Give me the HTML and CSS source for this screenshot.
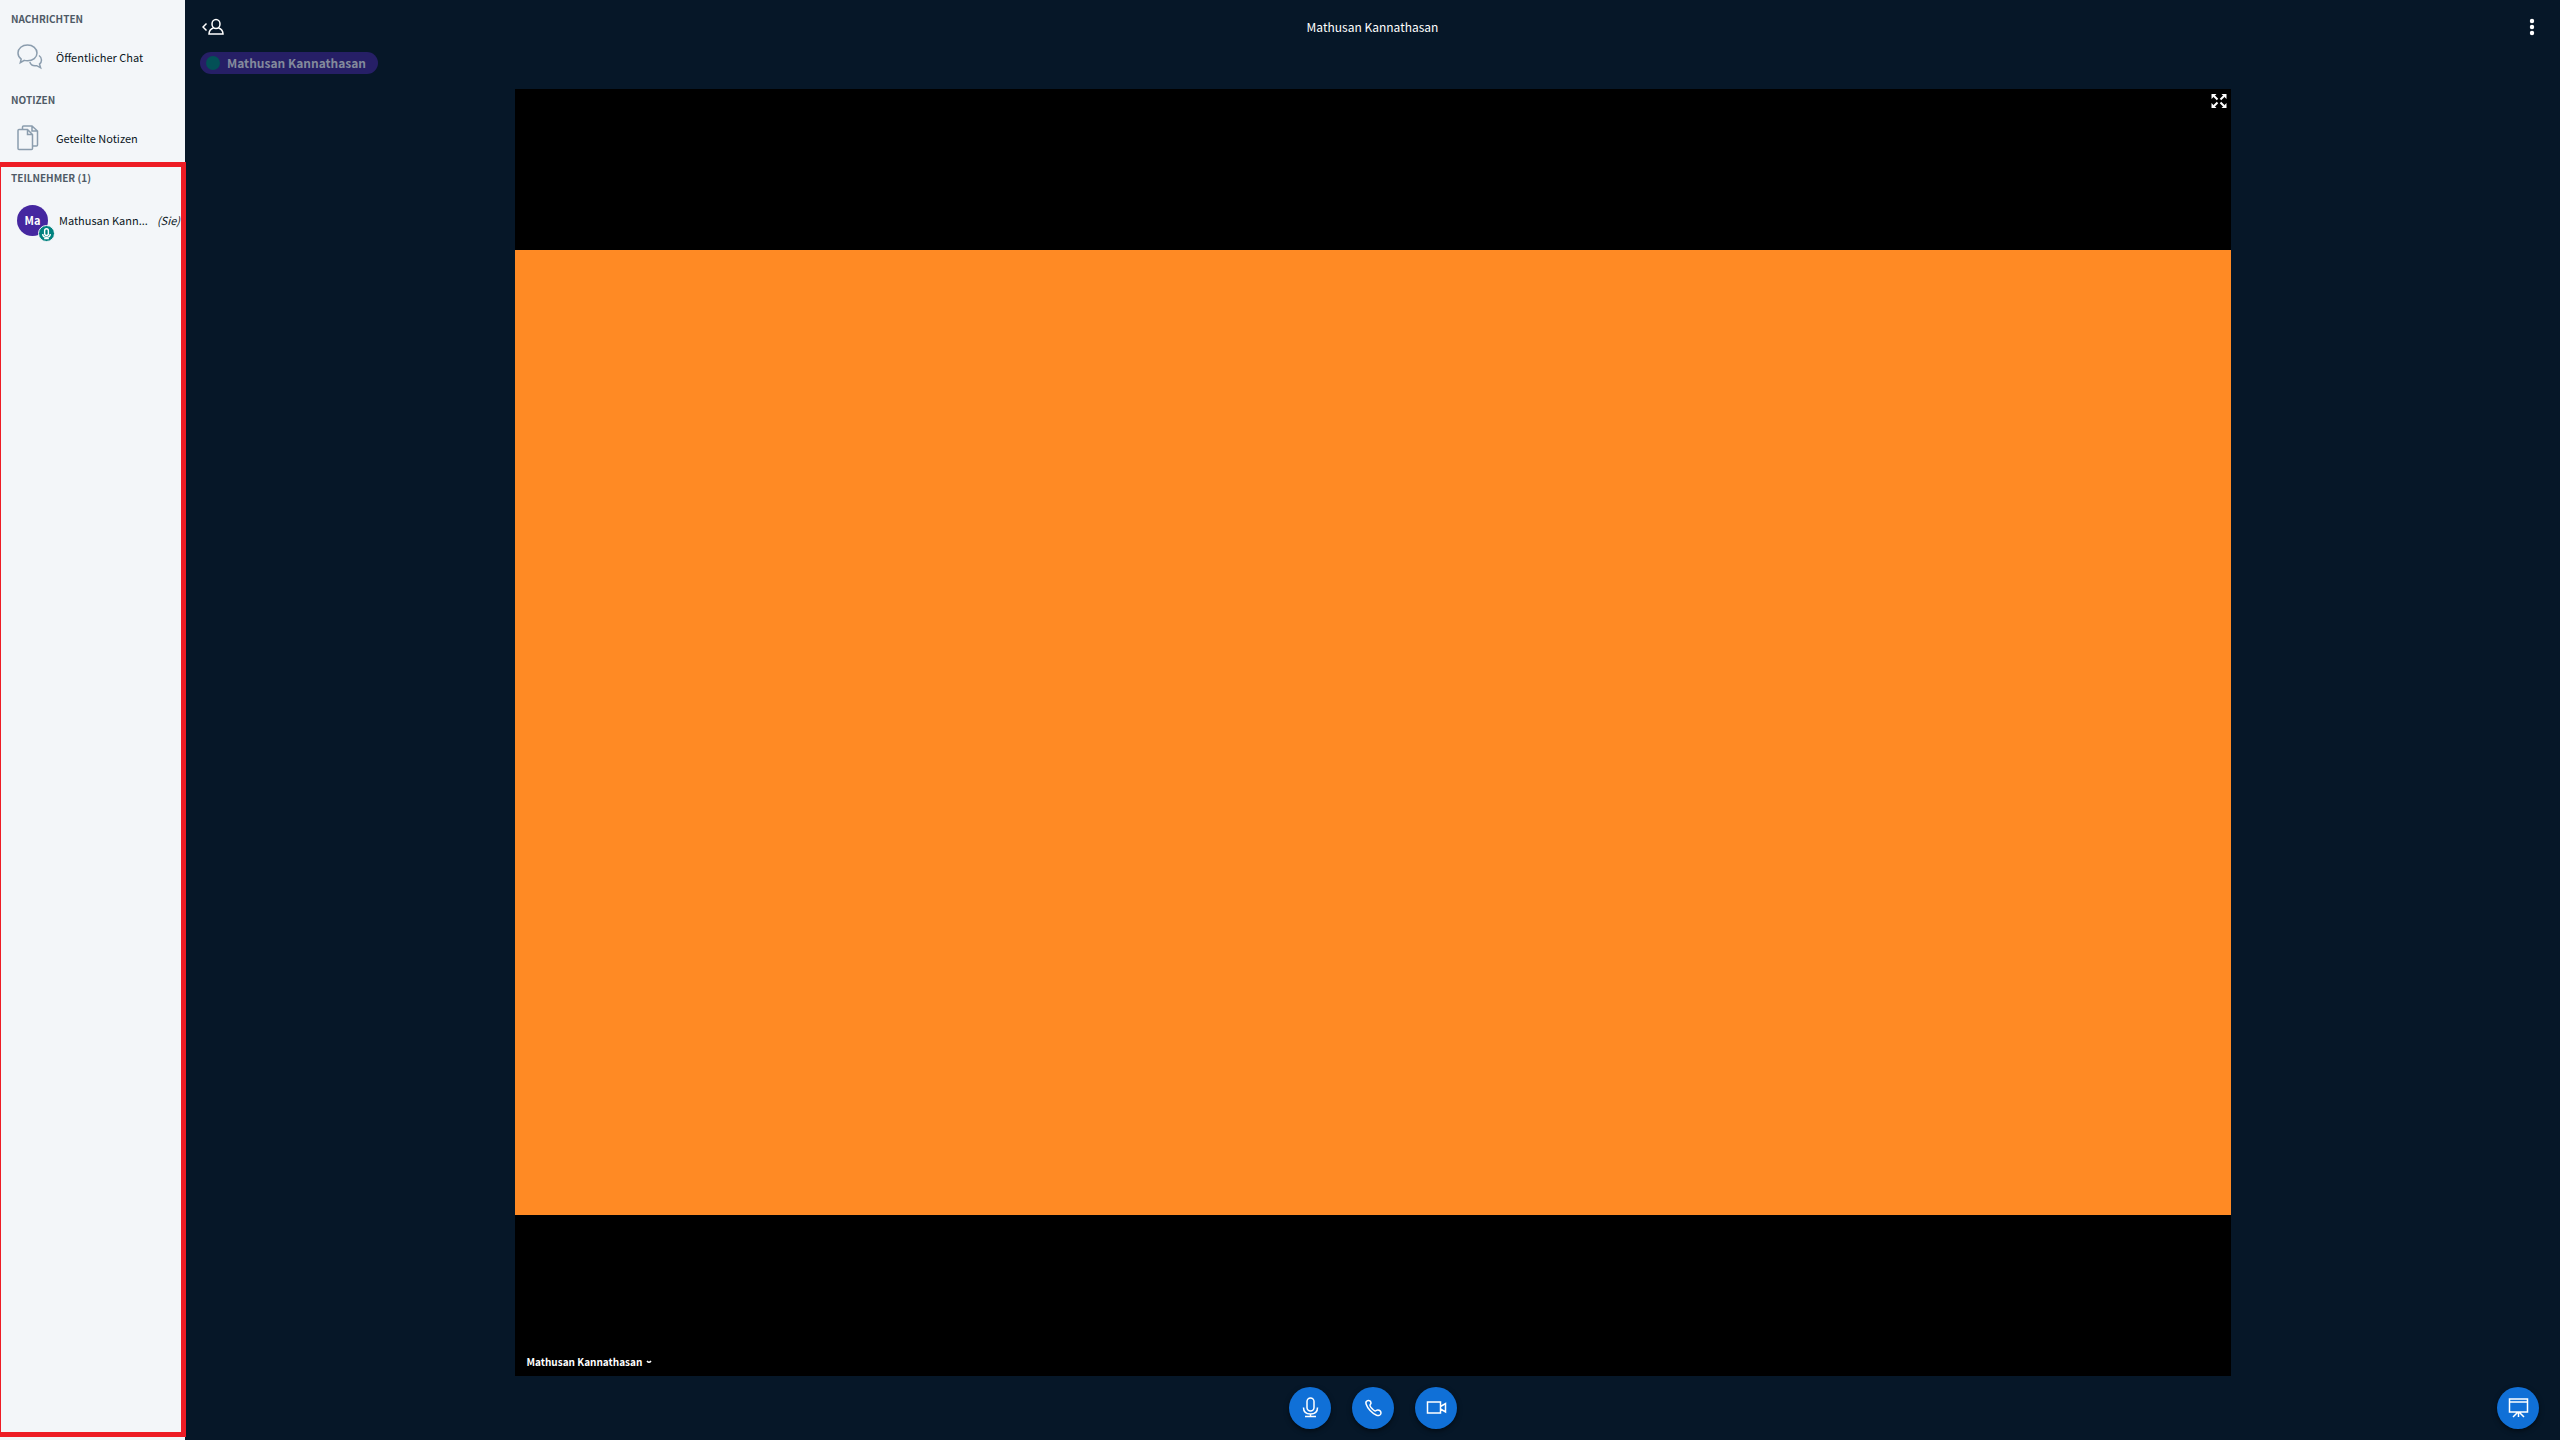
FILE: index.html
```html
<!DOCTYPE html>
<html lang="de">
<head>
<meta charset="utf-8">
<title>Mathusan Kannathasan</title>
<link rel="stylesheet" href="styles.css">
</head>
<body>
<div class="app">
  <aside class="sidebar">
    <section class="group">
      <h2 class="heading">NACHRICHTEN</h2>
      <a class="item" href="#chat">
        <svg class="item-icon" viewBox="0 0 26 26" aria-hidden="true"><path d="M10.500 1C5.200 1 1 4.400 1 9c0 2.600 1.300 4.700 3.200 6.100L3.300 18.700l4-2.300c1 .3 2.100.4 3.200.4C15.900 16.800 20 13.500 20 9S15.900 1 10.500 1z"/><path d="M22 11.500c1.600 1.100 2.500 2.600 2.500 4.400 0 1.700-.8 3.100-2 4.200l1.100 3.600-3.900-2c-3.400.6-6-.9-6.900-3.600"/></svg>
        <span>Öffentlicher Chat</span>
      </a>
    </section>
    <section class="group">
      <h2 class="heading">NOTIZEN</h2>
      <a class="item" href="#notes">
        <svg class="item-icon" viewBox="0 0 26 26" aria-hidden="true"><path d="M1 5.500Q1 4.500 2 4.500h8.500l5 5v14q0 1-1 1H2q-1 0-1-1zM10.500 4.500v5h5M5.500 4.500v-2.500q0-1 1-1H15l5.500 5v14q0 1-1 1h-4M15 1v5h5.500"/></svg>
        <span>Geteilte Notizen</span>
      </a>
    </section>
    <section class="group group-users">
      <h2 class="heading">TEILNEHMER (1)</h2>
      <div class="user">
        <span class="avatar">Ma
          <span class="badge"><svg viewBox="0 0 16 16" aria-hidden="true"><rect x="6" y="3" width="4" height="7" rx="2"/><path d="M4 8.500q0 3.500 4 3.500t4-3.500M8 12v1.500M5.500 13.500h5"/></svg></span>
        </span>
        <span class="user-name">Mathusan Kann...</span>
        <em class="you">(Sie)</em>
      </div>
      <div class="highlight"></div>
    </section>
  </aside>
  <main class="main">
    <header class="navbar">
      <button class="icon-button" type="button" aria-label="Teilnehmerliste umschalten">
        <svg width="22" height="18" viewBox="0 0 22 18" aria-hidden="true"><path d="M4.500 5.500 1 9l3.500 3.500"/><ellipse cx="14" cy="6" rx="4" ry="4.500"/><path d="M11.500 10Q7 11.500 7 16h14q0-4.500-4.500-6"/></svg>
      </button>
      <h1 class="title">Mathusan Kannathasan</h1>
      <button class="icon-button icon-end" type="button" aria-label="Optionen">
        <svg width="6" height="18" viewBox="0 0 6 18" aria-hidden="true"><g class="dots"><circle cx="3" cy="3" r="2.200"/><circle cx="3" cy="9" r="2.200"/><circle cx="3" cy="15" r="2.200"/></g></svg>
      </button>
    </header>
    <div class="talkers">
      <button class="talker" type="button"><span class="talker-dot"></span>Mathusan Kannathasan</button>
    </div>
    <div class="stage">
      <div class="webcam">
        <div class="video"></div>
        <button class="fullscreen" type="button" aria-label="Vollbild">
          <svg width="16" height="16" viewBox="0 0 16 16" aria-hidden="true"><path class="shaft" d="M3 3l3.500 3.500M13 3 9.500 6.500M3 13l3.500-3.500M13 13 9.500 9.500"/><path class="head" d="M.5 1h5l-5 5zM15.500 1v5l-5-5zM.5 15v-5l5 5zM15.500 15h-5l5-5z"/></svg>
        </button>
        <button class="cam-name" type="button">Mathusan Kannathasan
          <svg width="6" height="4" viewBox="0 0 6 4" aria-hidden="true"><path d="M1 1q2 2.500 4 0"/></svg>
        </button>
      </div>
    </div>
    <footer class="actions">
      <div class="actions-center">
        <button class="round" type="button" aria-label="Mikrofon">
          <svg viewBox="0 0 22 22" aria-hidden="true"><rect x="8" y="1" width="7" height="13" rx="3.500"/><path d="M4.500 10.500q0 6.500 7 6.500t7-6.500M11.500 17v2.500M6 19.500h11"/></svg>
        </button>
        <button class="round" type="button" aria-label="Audio verlassen">
          <svg viewBox="0 0 22 22" aria-hidden="true"><path d="M5.500 3.600C7.300 3 9 4.300 9 6.100c0 1.300-1.300 1.300-1 2.500.4 1.500 3.200 4.600 4.800 5.300 1.400.5 1.400-1 2.900-1 2.100 0 3.700 1.900 3.200 3.800-.4 1.700-2.400 2.200-4.300 1.500C9.900 16.300 5.500 11.300 4.100 6.900 3.600 5.400 4.200 4.100 5.500 3.600z"/></svg>
        </button>
        <button class="round" type="button" aria-label="Kamera">
          <svg viewBox="0 0 22 22" aria-hidden="true"><path d="M2.500 5h13v11h-13zM15.500 9.500l5-3v8.500l-5-3"/></svg>
        </button>
      </div>
      <button class="round round-end" type="button" aria-label="Präsentation wiederherstellen">
        <svg viewBox="0 0 22 22" aria-hidden="true"><path d="M2.500 2h18v13h-18zM2.500 5h18M11.500 15v5M10.500 15.500l-4.500 4.500M12.500 15.500l4.500 4.500"/></svg>
      </button>
    </footer>
  </main>
</div>
</body>
</html>
```
FILE: styles.css
```css
* {
  box-sizing: border-box;
}

body {
  margin: 0;
  font-family: "Noto Sans CJK SC", "Noto Sans", sans-serif;
  font-size: 12px;
  line-height: 20px;
  color: #0b1623;
}

button {
  padding: 0;
  border: 0;
  background: none;
  color: inherit;
  font: inherit;
}

svg {
  display: block;
  fill: none;
  stroke: currentColor;
  stroke-width: 1.5;
}

.app {
  display: grid;
  grid-template-columns: 185px minmax(0, 1fr);
  height: 100vh;
}

.sidebar {
  display: flex;
  flex-direction: column;
  background: #f3f6f9;
}

.group {
  padding: 9px 0 0 11px;
}

.heading {
  margin: 0;
  font-size: 10px;
  font-weight: 700;
  color: #4e5a66;
}

.item {
  display: flex;
  align-items: center;
  gap: 13px;
  height: 52px;
  padding: 4px 0 0 6px;
  font-size: 11px;
  color: inherit;
  text-decoration: none;
}

.item-icon {
  width: 26px;
  height: 26px;
  color: #8b9dae;
}

.group-users {
  position: relative;
  flex: 1;
  padding-top: 6px;
}

.user {
  display: flex;
  align-items: center;
  height: 64px;
  padding: 0 5px 0 6px;
  font-size: 11px;
}

.avatar {
  position: relative;
  flex: none;
  width: 31px;
  height: 31px;
  margin-right: 11px;
  border-radius: 50%;
  background: #4527a0;
  color: #fff;
  font-weight: 700;
  line-height: 30px;
  text-align: center;
}

.badge {
  position: absolute;
  right: -7px;
  bottom: -6px;
  width: 17px;
  height: 17px;
  border: 1px solid #f3f6f9;
  border-radius: 50%;
  background: #00827f;
}

.user-name {
  white-space: nowrap;
}

.you {
  margin-left: auto;
}

.highlight {
  position: absolute;
  inset: 0 -1px 3px 0;
  border: 5px solid #ee1c25;
  border-left-width: 1px;
  pointer-events: none;
}

.main {
  display: flex;
  flex-direction: column;
  min-width: 0;
  background: #061728;
  color: #fff;
}

.navbar {
  display: grid;
  grid-template-columns: 1fr auto 1fr;
  align-items: center;
  height: 52px;
  padding: 2px 17px 0;
}

.icon-end {
  justify-self: end;
  margin-right: 8px;
}

.dots {
  fill: #fff;
  stroke: none;
}

.title {
  margin: 0;
  font-size: 12px;
  font-weight: 400;
}

.talkers {
  height: 37px;
  padding-left: 15px;
}

.talker {
  display: flex;
  align-items: center;
  gap: 7px;
  height: 22px;
  padding: 0 12px 0 6px;
  border-radius: 11px;
  background: #261f66;
  color: #838a9c;
  font-weight: 700;
}

.talker-dot {
  width: 14px;
  height: 14px;
  border-radius: 50%;
  background: #035056;
}

.stage {
  display: flex;
  flex: 1;
  justify-content: center;
  min-height: 0;
}

.webcam {
  position: relative;
  display: flex;
  align-items: center;
  height: 100%;
  aspect-ratio: 4 / 3;
  background: #000;
}

.video {
  width: 100%;
  aspect-ratio: 16 / 9;
  background: #ff8a24;
}

.fullscreen {
  position: absolute;
  top: 4px;
  right: 4px;
}

.shaft {
  stroke-width: 2;
}

.head {
  fill: #fff;
  stroke: none;
}

.cam-name {
  position: absolute;
  bottom: 4px;
  left: 12px;
  display: flex;
  align-items: center;
  gap: 4px;
  font-size: 10px;
  font-weight: 700;
}

.actions {
  display: grid;
  grid-template-columns: 1fr auto 1fr;
  align-items: center;
  height: 64px;
  padding: 0 21px;
}

.actions-center {
  display: flex;
  grid-column: 2;
  gap: 21px;
}

.round {
  display: grid;
  place-items: center;
  width: 42px;
  height: 42px;
  border-radius: 50%;
  background: #1070d7;
  box-shadow: 0 2px 5px rgba(0, 0, 0, 0.5);
}

.round svg {
  width: 22px;
  height: 22px;
}

.round-end {
  justify-self: end;
}
```
